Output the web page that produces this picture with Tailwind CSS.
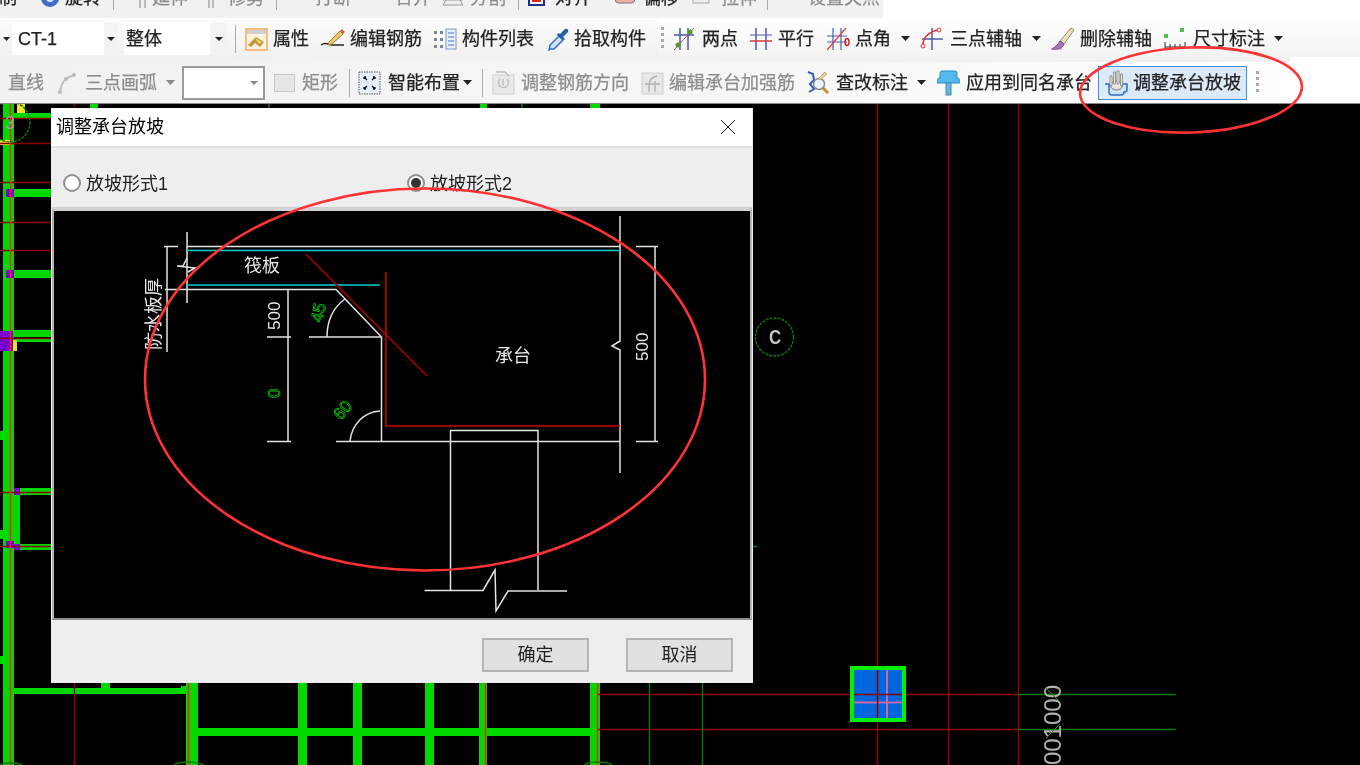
<!DOCTYPE html><html lang="en">
<head>
  <meta charset="UTF-8" />
  <title>调整承台放坡</title>
  <script src="https://cdn.jsdelivr.net/npm/@tailwindcss/browser@4"></script>
</head>
<body class="bg-white font-['Liberation_Sans','Noto_Sans_CJK_SC',sans-serif] text-[18px] leading-[18px] text-[#222]">
<div class="relative w-[1360px] h-[765px] overflow-hidden flex flex-col blur-[0.3px]">

  <!-- toolbars -->
  <header class="h-[104px] shrink-0 flex flex-col bg-white [-webkit-text-stroke:0.25px_currentColor]">
    <!-- row 1, cut off by the top of the shot -->
    <div class="h-[18px] w-[883px] overflow-hidden bg-[#f1f1f1]">
      <div class="flex items-center -mt-[11px] h-[18px] whitespace-nowrap">
        <span class="w-[18px] -ml-[1px]">制</span>
        <svg class="w-[20px] h-[20px] ml-[23px]" viewBox="0 0 20 20"><circle cx="10" cy="10" r="9" fill="#3f6fc4"/><circle cx="10" cy="10" r="4" fill="#dfe8f8"/></svg>
        <span class="ml-[5px]">旋转</span>
        <i class="w-px h-[24px] bg-[#aaa] ml-[12px]"></i>
        <svg class="w-[10px] h-[20px] ml-[24px]" viewBox="0 0 10 20"><path d="M2 0v20M7 0v20" stroke="#bbb" stroke-width="2"/></svg>
        <span class="ml-[4px] text-[#8e8e8e]">延伸</span>
        <svg class="w-[8px] h-[20px] ml-[19px]" viewBox="0 0 8 20"><path d="M2 0v20M6 0v20" stroke="#bbb" stroke-width="2"/></svg>
        <span class="ml-[13px] text-[#8e8e8e]">修剪</span>
        <i class="w-px h-[24px] bg-[#aaa] ml-[12px]"></i>
        <svg class="w-[16px] h-[20px] ml-[10px]" viewBox="0 0 16 20"><path d="M1 0v10h14V0" fill="#eee" stroke="#aaa"/></svg>
        <span class="ml-[12px] text-[#8e8e8e]">打断</span>
        <svg class="w-[20px] h-[20px] ml-[13px]" viewBox="0 0 20 20"><path d="M1 0v10h18V0" fill="#eee" stroke="#aaa"/></svg>
        <span class="ml-[11px] text-[#8e8e8e]">合并</span>
        <svg class="w-[22px] h-[20px] ml-[11px]" viewBox="0 0 22 20"><path d="M1 12h20M4 0v12M18 0v12l3 5H1l3-5" fill="#eee" stroke="#999"/></svg>
        <span class="ml-[6px] text-[#8e8e8e]">分割</span>
        <i class="w-px h-[24px] bg-[#aaa] ml-[12px]"></i>
        <svg class="w-[17px] h-[20px] ml-[9px]" viewBox="0 0 17 20"><rect x="1" y="0" width="15" height="17" fill="#fff" stroke="#1d2f86" stroke-width="2"/><path d="M4 13h9" stroke="#d22" stroke-width="2"/></svg>
        <span class="ml-[10px]">对齐</span>
        <svg class="w-[22px] h-[20px] ml-[23px]" viewBox="0 0 22 20"><rect x="1" y="0" width="20" height="15" rx="4" fill="#eab0a8" stroke="#777"/></svg>
        <span class="ml-[7px]">偏移</span>
        <svg class="w-[22px] h-[20px] ml-[11px]" viewBox="0 0 22 20"><rect x="3" y="1" width="16" height="14" fill="#eee" stroke="#aaa"/><path d="M8 6h6v6" stroke="#aaa" fill="none"/></svg>
        <span class="ml-[9px] text-[#8e8e8e]">拉伸</span>
        <i class="w-px h-[24px] bg-[#aaa] ml-[10px]"></i>
        <svg class="w-[26px] h-[20px] ml-[8px]" viewBox="0 0 26 20"><path d="M1 10h10M15 10h10M13 0v7" stroke="#888" stroke-width="2" stroke-dasharray="3 2"/></svg>
        <span class="ml-[6px] text-[#8e8e8e]">设置夹点</span>
      </div>
    </div>

    <!-- row 2 -->
    <div class="h-[39px] pt-[2px] flex items-center whitespace-nowrap bg-gradient-to-b from-white to-[#f3f3f3]">
      <div class="w-[658px] h-full flex items-center bg-gradient-to-b from-[#fbfbfb] to-[#f1f1f1]">
        <div class="w-[12px] h-[32px] pl-[3px] flex items-center"><svg class="w-[7px] h-[4px]" viewBox="0 0 7 4"><path d="M0 0h7L3.500 4z" fill="#222"/></svg></div>
        <div class="w-[106px] h-[32px] flex items-center bg-white pl-[6px]">
          <span class="flex-1">CT-1</span>
          <span class="w-[14px] h-full bg-[#f3f3f3] flex items-center justify-center"><svg class="w-[8px] h-[4px]" viewBox="0 0 8 4"><path d="M0 0h8L4 4z" fill="#222"/></svg></span>
        </div>
        <div class="w-[103px] h-[32px] ml-[6px] flex items-center bg-white pl-[2px]">
          <span class="flex-1">整体</span>
          <span class="w-[17px] h-full bg-[#f3f3f3] flex items-center justify-center"><svg class="w-[8px] h-[4px]" viewBox="0 0 8 4"><path d="M0 0h8L4 4z" fill="#222"/></svg></span>
        </div>
        <i class="w-px h-[28px] bg-[#aaa] ml-[8px]"></i>
        <svg class="w-[23px] h-[24px] ml-[9px]" viewBox="0 0 23 24"><rect x="1" y="2" width="21" height="21" fill="#fff3dc" stroke="#f4aa60" stroke-width="1.500"/><rect x="2" y="3" width="19" height="4" fill="#cfcfcf"/><path d="M3 18l8-8 8 5-4 5-5-4-4 4z" fill="#b89a38"/><path d="M10 11l7 4-3 2z" fill="#f1d776"/></svg>
        <span class="ml-[5px]">属性</span>
        <svg class="w-[25px] h-[24px] ml-[11px]" viewBox="0 0 25 24"><path d="M1 18c3-2 5-2 7-1l4 1h12" fill="none" stroke="#222" stroke-width="1.500"/><path d="M9 15L20 4l3 3-11 10-4 1z" fill="#eccb70" stroke="#a97a30"/><path d="M20 4l2-2 3 3-2 2z" fill="#d8604c"/></svg>
        <span class="ml-[5px]">编辑钢筋</span>
        <svg class="w-[24px] h-[24px] ml-[11px]" viewBox="0 0 24 24"><rect x="13" y="2" width="10" height="20" fill="#e6eefb" stroke="#7f95bd"/><path d="M15 6h6M15 10h6M15 14h6M15 18h6" stroke="#4f78bb"/><path d="M1 4h3v3H1zM7 4h3v3H7zM1 11h3v3H1zM7 11h3v3H7zM1 18h3v3H1zM7 18h3v3H7z" fill="#7b8798"/></svg>
        <span class="ml-[5px]">构件列表</span>
        <svg class="w-[22px] h-[24px] ml-[14px]" viewBox="0 0 22 24"><path d="M2 22l-1 1 1-5L12 8l4 4L6 22z" fill="#cfe2fb" stroke="#2f6fc8" stroke-width="1.500"/><path d="M12 7l5-5c2-1 4 1 3 3l-5 5 1 2-2 1-5-5 1-2z" fill="#2a5caa"/></svg>
        <span class="ml-[4px]">拾取构件</span>
      </div>
      <svg class="w-[3px] h-[28px] ml-[3px]" viewBox="0 0 3 28"><path d="M1.500 2v24" stroke="#aaa" stroke-width="3" stroke-dasharray="3 3"/></svg>
      <svg class="w-[22px] h-[24px] ml-[9px]" viewBox="0 0 22 24"><path d="M7 1v22M15 1v22M1 8h20" stroke="#4a5da8" stroke-width="1.500"/><path d="M1 23L21 1" stroke="#e03a3a"/><circle cx="5" cy="18" r="2.500" fill="#4d9a2a"/><circle cx="17" cy="5" r="2.500" fill="#4d9a2a"/></svg>
      <span class="ml-[7px]">两点</span>
      <svg class="w-[22px] h-[24px] ml-[12px]" viewBox="0 0 22 24"><path d="M6 1v22M16 1v22" stroke="#4a5da8" stroke-width="1.500"/><path d="M0 8h22" stroke="#4a5da8"/><path d="M0 14h22" stroke="#d83a3a" stroke-width="1.500"/></svg>
      <span class="ml-[6px]">平行</span>
      <svg class="w-[23px] h-[24px] ml-[13px]" viewBox="0 0 23 24"><path d="M6 1v22M14 1v22M0 9h20M0 15h20" stroke="#4a5da8" stroke-width="1.200"/><path d="M0 23L19 1" stroke="#e03a3a" stroke-width="1.200"/><ellipse cx="20" cy="15" rx="2" ry="3.500" fill="none" stroke="#d42020" stroke-width="1.500"/></svg>
      <span class="ml-[5px]">点角</span>
      <svg class="w-[9px] h-[5px] ml-[10px]" viewBox="0 0 9 5"><path d="M0 0h9L4.500 5z" fill="#222"/></svg>
      <svg class="w-[23px] h-[24px] ml-[10px]" viewBox="0 0 23 24"><path d="M12 1v22M2 12h21" stroke="#4a5da8" stroke-width="1.500"/><path d="M3 18C3 10 10 4 19 3" fill="none" stroke="#e03030" stroke-width="1.500"/><circle cx="3" cy="19" r="2" fill="#fff" stroke="#e03030"/><circle cx="19" cy="3" r="2" fill="#fff" stroke="#e03030"/></svg>
      <span class="ml-[7px]">三点辅轴</span>
      <svg class="w-[9px] h-[5px] ml-[10px]" viewBox="0 0 9 5"><path d="M0 0h9L4.500 5z" fill="#222"/></svg>
      <svg class="w-[25px] h-[26px] ml-[9px]" viewBox="0 0 25 26"><path d="M10 15L21 2l3 2-10 14z" fill="#e8e2c8" stroke="#a08a50"/><path d="M10 15l4 3c-1 4-6 6-12 5 3-2 6-4 8-8z" fill="#b070c0" stroke="#7a4a80"/><path d="M1 23h12" stroke="#888" stroke-dasharray="2 1"/></svg>
      <span class="ml-[5px]">删除辅轴</span>
      <svg class="w-[25px] h-[24px] ml-[11px]" viewBox="0 0 25 24"><rect x="1" y="7" width="4" height="4" fill="#4fc04f"/><rect x="17" y="1" width="4" height="4" fill="#4fc04f"/><path d="M2 15v7M22 15v7M2 20h20" stroke="#333"/><path d="M7 17v4M12 17v4M17 17v4" stroke="#333"/></svg>
      <span class="ml-[5px]">尺寸标注</span>
      <svg class="w-[9px] h-[5px] ml-[9px]" viewBox="0 0 9 5"><path d="M0 0h9L4.500 5z" fill="#222"/></svg>
    </div>

    <div class="h-[5px] w-[1290px] bg-[#f1f1f1]"></div>

    <!-- row 3 -->
    <div class="h-[42px] flex items-center whitespace-nowrap border-b border-[#8a8a8a] bg-gradient-to-r from-[#f1f1f1] via-[#f6f6f6] to-white">
      <span class="ml-[8px] text-[#8e8e8e]">直线</span>
      <svg class="w-[20px] h-[24px] ml-[13px]" viewBox="0 0 20 24"><path d="M3 21C4 12 9 6 17 4" fill="none" stroke="#c4c4c4" stroke-width="2"/><circle cx="3" cy="21" r="2" fill="#bbb"/><circle cx="9" cy="8" r="2" fill="#bbb"/><circle cx="17" cy="4" r="2" fill="#bbb"/></svg>
      <span class="ml-[8px] text-[#8e8e8e]">三点画弧</span>
      <svg class="w-[9px] h-[5px] ml-[9px]" viewBox="0 0 9 5"><path d="M0 0h9L4.500 5z" fill="#888"/></svg>
      <div class="w-[83px] h-[34px] ml-[7px] flex items-center justify-end pr-[5px] bg-white border-2 border-[#9a9a9a]"><svg class="w-[8px] h-[4px]" viewBox="0 0 8 4"><path d="M0 0h8L4 4z" fill="#888"/></svg></div>
      <svg class="w-[21px] h-[18px] ml-[9px]" viewBox="0 0 21 18"><rect x="0.500" y="0.500" width="20" height="17" fill="#e6e6e6" stroke="#c8c8c8"/></svg>
      <span class="ml-[7px] text-[#8e8e8e]">矩形</span>
      <i class="w-px h-[28px] bg-[#aaa] ml-[11px]"></i>
      <svg class="w-[23px] h-[24px] ml-[8px]" viewBox="0 0 23 24"><rect x="1" y="1" width="21" height="22" fill="#e6eefb" stroke="#555" stroke-dasharray="1.500 1"/><path d="M6 6l3 3M17 6l-3 3M6 18l3-3M17 18l-3-3M6 6h2M6 6v2M17 6h-2M17 6v2M6 18h2M6 18v-2M17 18h-2M17 18v-2" stroke="#111" stroke-width="1.300"/></svg>
      <span class="ml-[7px]">智能布置</span>
      <svg class="w-[9px] h-[5px] ml-[3px]" viewBox="0 0 9 5"><path d="M0 0h9L4.500 5z" fill="#222"/></svg>
      <i class="w-px h-[28px] bg-[#aaa] ml-[10px]"></i>
      <svg class="w-[23px] h-[24px] ml-[9px]" viewBox="0 0 23 24"><rect x="1" y="4" width="21" height="19" fill="#e8e8e8" stroke="#cfcfcf"/><path d="M4 1h9l4 4M8 8a5 5 0 1 0 7 0M11 8v7" fill="none" stroke="#bcbcbc" stroke-width="1.300"/></svg>
      <span class="ml-[6px] text-[#8e8e8e]">调整钢筋方向</span>
      <svg class="w-[23px] h-[24px] ml-[12px]" viewBox="0 0 23 24"><rect x="1" y="2" width="21" height="21" fill="#e8e8e8" stroke="#cfcfcf"/><path d="M16 5c-5 1-8 5-8 10v6M4 13h15M14 10v11" fill="none" stroke="#b0b0b0" stroke-width="1.300"/></svg>
      <span class="ml-[5px] text-[#8e8e8e]">编辑承台加强筋</span>
      <svg class="w-[25px] h-[26px] ml-[10px]" viewBox="0 0 25 26"><path d="M3 2l5 2 1 6-4 4 4 5-5 3" fill="none" stroke="#2d5fb0" stroke-width="2"/><circle cx="14" cy="14" r="5.500" fill="#eef3f8" stroke="#8a8a8a" stroke-width="1.500"/><path d="M18 18l5 5" stroke="#c98a3a" stroke-width="3"/><path d="M13 9l7-7 2 2-7 6z" fill="#e5d08a" stroke="#a08a50" stroke-width="0.600"/></svg>
      <span class="ml-[6px]">查改标注</span>
      <svg class="w-[9px] h-[5px] ml-[9px]" viewBox="0 0 9 5"><path d="M0 0h9L4.500 5z" fill="#222"/></svg>
      <svg class="w-[23px] h-[26px] ml-[11px]" viewBox="0 0 23 26"><path d="M5 1h13c2 0 2 2 2 4v3c2 0 3 1 3 3v2H0v-2c0-2 1-3 3-3V5c0-2 0-4 2-4z" fill="#55b8ea" stroke="#2b8cc4"/><rect x="9" y="13" width="5" height="12" fill="#6bb6e0" stroke="#3a8cc0"/></svg>
      <span class="ml-[6px]">应用到同名承台</span>
      <div class="w-[149px] h-[34px] ml-[6px] flex items-center pl-[5px] bg-[#dbe9f8] border-[1.500px] border-[#3c8fdc]">
        <svg class="w-[24px] h-[26px]" viewBox="0 0 24 26"><path d="M1 14h4v8c0 2 1 3 3 3h9c2 0 3-1 3-3h1c1 0 2-1 2-2v-6h-5" fill="#cfe3fa" stroke="#2f6fc8" stroke-width="1.500"/><ellipse cx="12.500" cy="15.500" rx="6" ry="4.500" fill="#e8e4dc" stroke="#777"/><path d="M7 15V7M10.500 13V3M14 13V2M17.500 15V5" stroke="#777" stroke-width="2.800" stroke-linecap="round"/><path d="M7 15V7M10.500 13V3M14 13V2M17.500 15V5" stroke="#eee8dc" stroke-width="1.400" stroke-linecap="round"/></svg>
        <span class="ml-[5px]">调整承台放坡</span>
      </div>
      <svg class="w-[3px] h-[28px] ml-[9px]" viewBox="0 0 3 28"><path d="M1.500 2v24" stroke="#aaa" stroke-width="3" stroke-dasharray="3 3"/></svg>
    </div>
  </header>

  <!-- drawing canvas -->
  <main class="relative flex-1 bg-black">
    <svg class="w-[1360px] h-[661px]" viewBox="0 104 1360 661">
      <!-- left column and beams -->
      <g fill="#00d800">
        <rect x="90" y="104" width="8" height="4"/>
        <rect x="480" y="104" width="7" height="4"/>
        <rect x="590" y="104" width="10" height="4"/>
        <rect x="3" y="104" width="11" height="661"/>
        <rect x="14" y="113" width="37" height="5"/>
        <rect x="14" y="189" width="37" height="8"/>
        <rect x="14" y="270" width="37" height="8"/>
        <rect x="14" y="330" width="37" height="7"/>
        <rect x="14" y="339" width="37" height="3"/>
        <rect x="14" y="488" width="37" height="7"/>
        <rect x="14" y="544" width="37" height="6"/>
        <rect x="11" y="495" width="9" height="49"/>
        <rect x="0" y="431" width="4" height="9"/>
        <rect x="0" y="530" width="4" height="9"/>
        <rect x="0" y="656" width="4" height="8"/>
        <rect x="14" y="688" width="172" height="6"/>
        <rect x="101" y="683" width="9" height="5"/>
        <rect x="186" y="683" width="12" height="82"/>
        <rect x="198" y="728" width="392" height="8"/>
        <rect x="298" y="683" width="9" height="82"/>
        <rect x="353" y="683" width="9" height="82"/>
        <rect x="425" y="683" width="9" height="82"/>
        <rect x="479" y="683" width="8" height="82"/>
        <rect x="590" y="683" width="10" height="82"/>
        <rect x="181" y="686" width="5" height="6"/>
      </g>
      <g fill="#f2e020">
        <rect x="17" y="104" width="8" height="9"/>
        <rect x="0" y="140" width="10" height="5"/>
        <rect x="13" y="340" width="4" height="11"/>
      </g>
      <g fill="#7a00d0">
        <rect x="6" y="189" width="8" height="8"/>
        <rect x="6" y="270" width="8" height="8"/>
        <rect x="0" y="331" width="13" height="20"/>
        <rect x="14" y="488" width="6" height="7"/>
        <rect x="6" y="541" width="8" height="7"/>
        <rect x="14" y="544" width="6" height="6"/>
      </g>
      <!-- axis lines -->
      <g stroke="#8c0000" stroke-width="1.500" fill="none">
        <path d="M0 118.500H51M0 143.500H51M0 182.500H51M0 222.500H51M0 250.500H51M0 338.500H51M0 492.500H51M0 546.500H51"/>
        <path d="M74.500 104V108M74.500 683V765"/>
        <path d="M877.500 104V765M948.500 104V765M1018.500 104V765"/>
        <path d="M597 694.500H1018M597 729.500H1018"/>
      </g>
      <path d="M10.500 104V765M188.500 683V765M485.500 683V765M597.500 683V765" stroke="#f02818" stroke-width="1.500" fill="none"/>
      <g stroke="#087a08" stroke-width="1.400" fill="none">
        <path d="M649.500 683V765M702.500 683V765M269 104V108M522 104V108M1018 694.500H1176M1018 729.500H1176"/>
        <path d="M752 546.500H757"/>
        <circle cx="10" cy="122" r="20" stroke-dasharray="3 1"/>
        <circle cx="774.500" cy="337" r="19" stroke-dasharray="3 1"/>
        <path d="M0 765c4-3 16-3 22 0M174 765c6-4 22-4 30 0M584 765c6-4 22-4 28 0"/>
      </g>
      <text x="10" y="129" text-anchor="middle" font-size="18" fill="#a89aa8">3</text>
      <text transform="translate(775,344) scale(0.8,1)" text-anchor="middle" font-size="21" font-weight="700" fill="#c4c4c4">C</text>
      <!-- footing on the axis crossing -->
      <rect x="852" y="668" width="52" height="52" fill="#0066dd" stroke="#00f000" stroke-width="4"/>
      <path d="M887 670V718M854 702.500H902" stroke="#c868a8" stroke-width="2"/>
      <path d="M877.500 670V718M854 694.500H902" stroke="#8c0000" stroke-width="1.500"/>
      <text transform="translate(1061,685) rotate(-90)" text-anchor="end" font-size="24" fill="#b0b0b0">10001000</text>
      <path d="M1046 688l14 14M1046 738l14-14" stroke="#2a8a2a"/>
    </svg>

    <!-- dialog window -->
    <section class="absolute left-[51px] top-[4px] w-[702px] h-[575px] flex flex-col bg-[#eeeeee]">
      <div class="h-[38px] shrink-0 bg-white mr-px flex items-center justify-between pl-[5px] pr-[16px]">
        <span class="text-black">调整承台放坡</span>
        <svg class="w-[16px] h-[16px]" viewBox="0 0 16 16"><path d="M1 1l14 14M15 1L1 15" stroke="#111"/></svg>
      </div>
      <div class="h-[2px] shrink-0 bg-[#e2e2e2]"></div>
      <div class="h-[59px] shrink-0 flex items-center pt-[10px] pl-[12px]">
        <span class="w-[18px] h-[18px] rounded-full border-2 border-[#8f8f8f] bg-white"></span>
        <span class="ml-[5px] w-[321px] pt-[3px]">放坡形式1</span>
        <span class="w-[18px] h-[18px] rounded-full border-2 border-[#8f8f8f] bg-white flex items-center justify-center"><i class="w-[10px] h-[10px] rounded-full bg-[#333]"></i></span>
        <span class="ml-[5px] pt-[3px]">放坡形式2</span>
      </div>
      <div class="h-[413px] shrink-0 ml-px mr-[1px] border-t-[4px] border-l-[2px] border-r-[2px] border-b-[2px] border-t-[#d2d2d2] border-l-[#b4b4b4] border-r-[#b4b4b4] border-b-[#8c8c8c] bg-black">
        <svg class="w-[696px] h-[407px]" viewBox="54 211 696 407">
          <g stroke="#e4e4e4" stroke-width="1.500" fill="none">
            <path d="M187 246.500H620M187 232V303M164 246.500H178M167 246V352M165 289.500H336L381.500 337V441.500M336 441.500H620"/>
            <path d="M187 258L183 266H177L195 268L188 272"/>
            <path d="M288 290V441M267 337H291M267 441.500H291M309 337H381"/>
            <path d="M327 337C327 320 334 307 345 299"/>
            <path d="M350 441C352 424 364 412 380 411"/>
            <path d="M620 216V341L612 346L620 350V473M636 246.500H658M655 246V441.500M636 441.500H658"/>
            <path d="M450.500 590V430.500H538V590"/>
            <path d="M424.500 590.500H483L495 570L496 611L508 591H567"/>
          </g>
          <path d="M187 250.500H620M187 285H380" stroke="#00d0d0" stroke-width="1.500" fill="none"/>
          <path d="M306 254L427 376" stroke="#a80000" stroke-width="1.500" fill="none"/>
          <path d="M386 272V426H620" stroke="#d00000" stroke-width="1.500" fill="none"/>
          <g font-size="18" fill="#e8e8e8">
            <text x="244" y="272">筏板</text>
            <text x="495" y="362">承台</text>
            <text transform="translate(160,350) rotate(-90)">防水板厚</text>
            <text transform="translate(280,330) rotate(-90)" font-size="17">500</text>
            <text transform="translate(648,361) rotate(-90)" font-size="17">500</text>
          </g>
          <g font-size="17" fill="none" stroke="#00c800" stroke-width="0.800">
            <text transform="translate(322,323) rotate(-78)">45</text>
            <text transform="translate(280,398) rotate(-90)">0</text>
            <text transform="translate(341,421) rotate(-50)">60</text>
          </g>
        </svg>
      </div>
      <div class="flex-1 flex justify-end items-center gap-[37px] pt-[6px] pr-[20px]">
        <button class="w-[107px] h-[34px] bg-[#e1e1e1] border-2 border-[#b4b4b4]">确定</button>
        <button class="w-[107px] h-[34px] bg-[#e1e1e1] border-2 border-[#b4b4b4]">取消</button>
      </div>
    </section>
  </main>

  <!-- red hand-drawn ellipses over everything -->
  <svg class="absolute inset-0 w-[1360px] h-[765px] pointer-events-none" viewBox="0 0 1360 765">
    <ellipse cx="425" cy="379.500" rx="280" ry="191" fill="none" stroke="#ff3333" stroke-width="2.600"/>
    <ellipse cx="1191" cy="90" rx="111" ry="42.500" transform="rotate(-2 1191 90)" fill="none" stroke="#ff3333" stroke-width="2.600"/>
  </svg>
</div>
</body>
</html>
